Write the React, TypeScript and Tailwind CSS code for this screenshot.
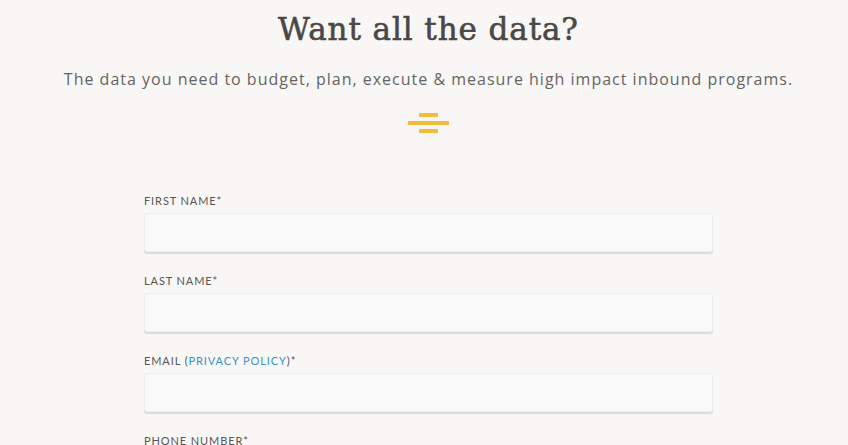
const fields = [
  { label: 'FIRST NAME', link: false },
  { label: 'LAST NAME', link: false },
  { label: 'EMAIL', link: true },
  { label: 'PHONE NUMBER', link: false },
];

export default function App() {
  return (
    <div className="min-h-screen h-[445px] overflow-hidden bg-[#f8f7f5] pl-[9px]">
      <div className="flex flex-col items-center pt-[10px]">
        <h1 className="text-[31px] leading-[38px] font-normal tracking-[0.9px] text-[#4a4847] [font-family:'DejaVu_Serif',serif] [-webkit-text-stroke:0.6px_#4a4847]">
          Want all the data?
        </h1>
        <p className="mt-[20px] text-[16px] leading-[22px] tracking-[1px] text-[#666463] [font-family:'Open_Sans',sans-serif]">
          The data you need to budget, plan, execute &amp; measure high impact inbound programs.
        </p>
        <div className="mt-[23px] flex flex-col items-center gap-[4px]">
          <span className="block h-[4px] w-[19px] bg-[#f2bb3c]" />
          <span className="block h-[4px] w-[41px] bg-[#f2bb3c]" />
          <span className="block h-[4px] w-[19px] bg-[#f2bb3c]" />
        </div>
      </div>
      <form className="mx-auto mt-[62px] w-[569px] flex flex-col gap-[23px] [font-family:Lato,sans-serif]">
        {fields.map((f) => (
          <div key={f.label} className="flex flex-col gap-[6px]">
            <label className="text-[11px] leading-[12px] tracking-[0.9px] text-[#575555]">
              {f.label}
              {f.link && (
                <>
                  {' ('}
                  <a className="text-[#3b93c4]">PRIVACY POLICY</a>)
                </>
              )}
              *
            </label>
            <input
              type="text"
              className="h-[39px] w-full rounded-[3px] border border-[#efeded] bg-[#f9f9f9] shadow-[0_2px_0_#dedcdc] outline-none"
            />
          </div>
        ))}
      </form>
    </div>
  );
}
